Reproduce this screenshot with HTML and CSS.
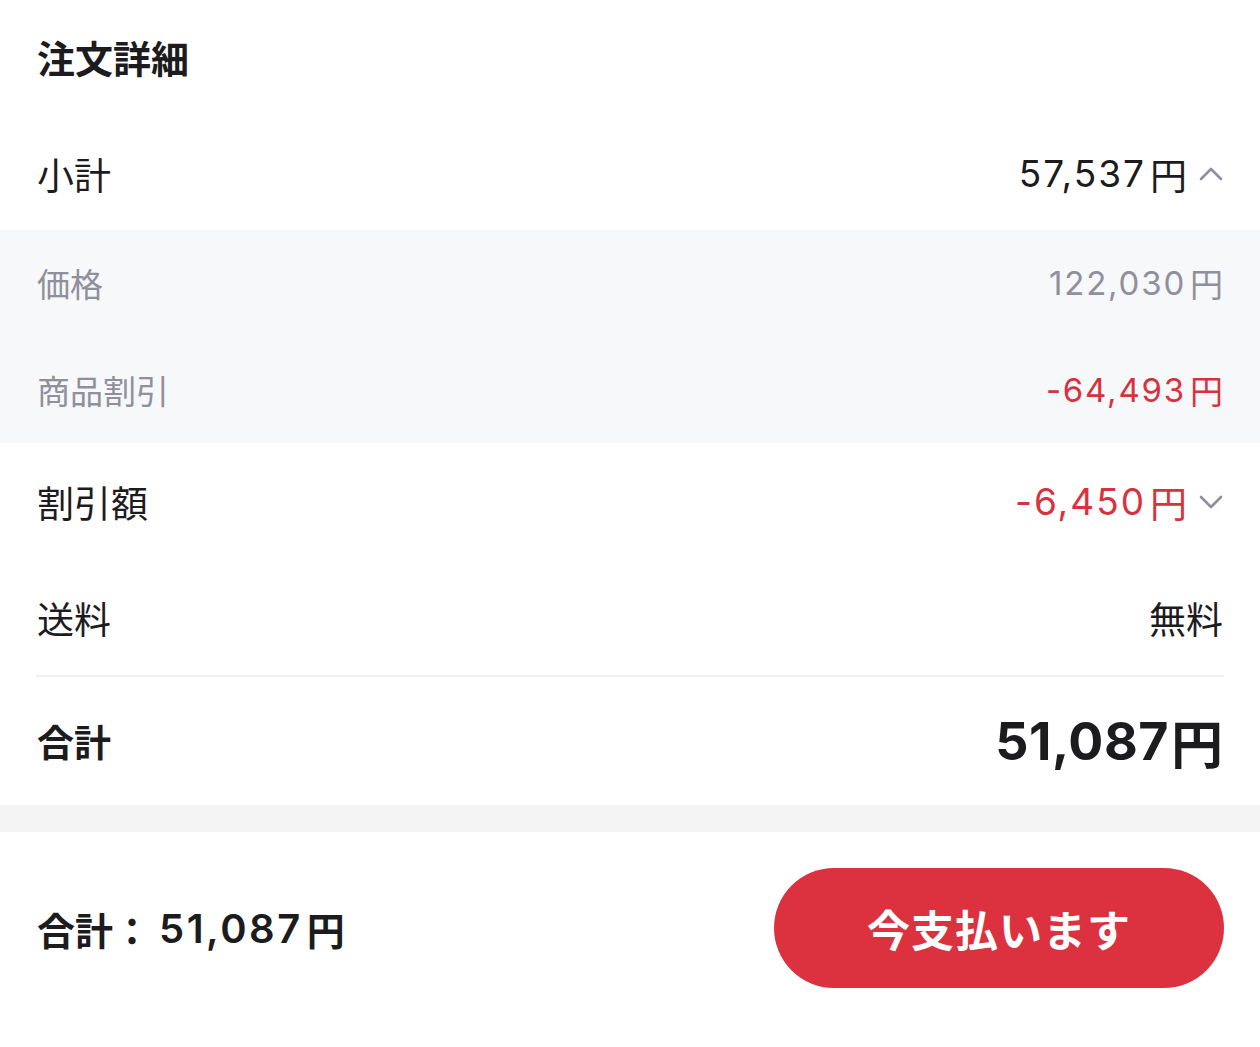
FILE: index.html
```html
<!DOCTYPE html>
<html lang="ja">
<head>
<meta charset="UTF-8" />
<meta name="viewport" content="width=device-width, initial-scale=1" />
<title>注文詳細</title>
<link rel="stylesheet" href="styles.css">
</head>
<body>

<div class="page">
  <h2 class="title">注文詳細</h2>

  <div class="row row-sub">
    <span class="label">小計</span>
    <span class="value"><span class="num">57,537</span>円
      <svg class="chev" viewBox="0 0 24 14" width="24" height="14"><path d="M2 12 L12 2 L22 12" /></svg>
    </span>
  </div>

  <div class="detail">
    <div class="row row-detail">
      <span class="label">価格</span>
      <span class="value"><span class="num">122,030</span>円</span>
    </div>
    <div class="row row-detail">
      <span class="label">商品割引</span>
      <span class="value red"><span class="num">-64,493</span>円</span>
    </div>
  </div>

  <div class="row row-disc">
    <span class="label">割引額</span>
    <span class="value red"><span class="num">-6,450</span>円
      <svg class="chev" viewBox="0 0 24 14" width="24" height="14"><path d="M2 2 L12 12 L22 2" /></svg>
    </span>
  </div>

  <div class="row row-ship">
    <span class="label">送料</span>
    <span class="value">無料</span>
  </div>

  <div class="divider"></div>

  <div class="row row-total">
    <span class="label">合計</span>
    <span class="value"><span class="num">51,087</span>円</span>
  </div>
</div>

<div class="band"></div>

<div class="footer">
  <span class="footer-total">合計：<span class="num">51,087</span>円</span>
  <button class="pay">今支払います</button>
</div>

</body>
</html>
```

FILE: styles.css
```css
* {
  box-sizing: border-box;
}

body {
  margin: 0;
  background: #fff;
  color: #1c1c1e;
  font-family: Inter, "Noto Sans CJK JP", sans-serif;
}

/* --- ブロック上部 --- */
.title {
  margin: 0;
  height: 120px;
  padding: 0 37px 8px;
  display: flex;
  align-items: center;
  font-size: 38px;
  font-weight: 700;
}

.row {
  display: flex;
  justify-content: space-between;
  align-items: center;
  padding: 0 37px 3px;
  font-size: 37px;
}

.value {
  display: flex;
  align-items: center;
}

.num {
  letter-spacing: 2px;
  margin-right: 4px;
}

.chev {
  margin-left: 12px;
  fill: none;
  stroke: #8e909c;
  stroke-width: 2.6;
  stroke-linecap: round;
  stroke-linejoin: round;
}

.row-sub {
  height: 110px;
}

/* --- 明細（グレー） --- */
.detail {
  background: #f7f8fa;
}
.row-detail {
  height: 106.5px;
  font-size: 33px;
  color: #8e909c;
  padding-bottom: 0;
}
.row-detail .num {
  letter-spacing: 1.8px;
}

.red {
  color: #d8323f !important;
}

.row-disc {
  height: 120px;
}
.row-ship {
  height: 112px;
}

.divider {
  height: 2px;
  margin: 0 36px;
  background: #f0f0f2;
}

.row-total {
  height: 128px;
  font-weight: 700;
  padding-bottom: 0;
}
.row-total .value {
  font-size: 52px;
}
.row-total .num {
  letter-spacing: 0.5px;
  margin-right: 2px;
}

.band {
  height: 27px;
  background: #f4f4f5;
}

/* --- フッター --- */
.footer {
  height: 192px;
  display: flex;
  justify-content: space-between;
  align-items: center;
  padding: 0 36px 0 37px;
}
.footer-total {
  display: flex;
  align-items: center;
  font-size: 38px;
  font-weight: 700;
}
.footer-total .num {
  margin-left: 8px;
  font-size: 40px;
  letter-spacing: 2.5px;
  font-weight: 600;
}
.pay {
  width: 450px;
  height: 120px;
  border: none;
  border-radius: 60px;
  background: #dc313f;
  color: #fff;
  font-family: inherit;
  font-size: 43px;
  font-weight: 700;
  letter-spacing: 1px;
}
```
